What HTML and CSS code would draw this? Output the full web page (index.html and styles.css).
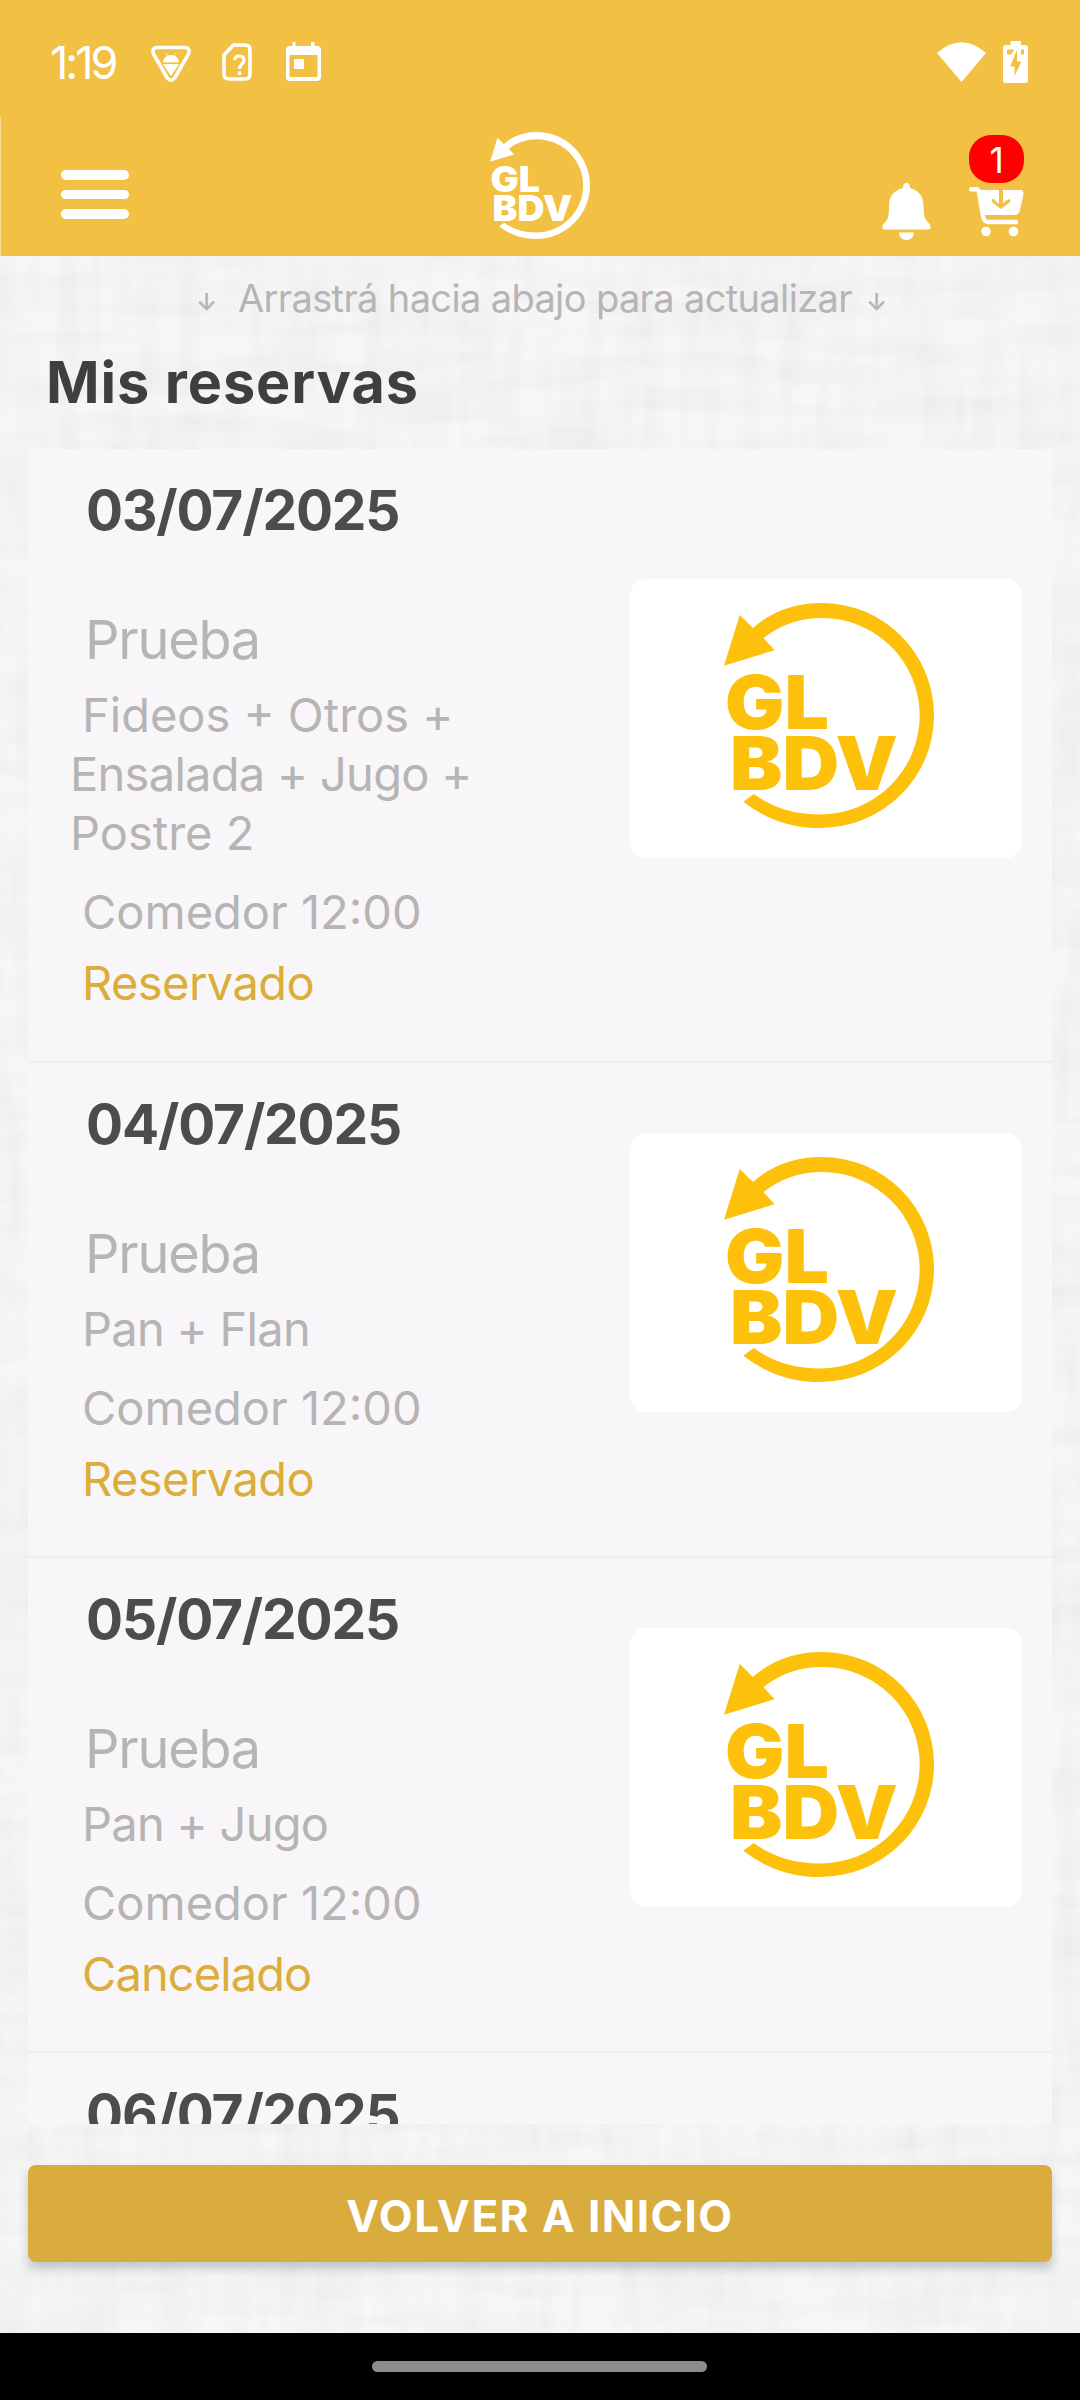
FILE: index.html
```html
<!DOCTYPE html>
<html lang="es">
<head>
<meta charset="utf-8">
<title>Mis reservas</title>
<link rel="stylesheet" href="styles.css">
</head>
<body>
<svg class="defs" width="0" height="0" aria-hidden="true">
  <symbol id="ring" viewBox="0 0 210 225">
    <path d="M0 62.7 15.7 12 29 25Q57 0 98 0A112 112.5 0 0 1 210 112.5A114 112.5 0 0 1 96 225Q53 225 19.3 198.7L29.7 191Q58 211.5 96 211.5A99.7 99 0 0 0 195.7 112.5A97.7 97.5 0 0 0 98 15Q65 15 39.5 35L50.5 47.3Z"/>
  </symbol>
  <filter id="weave-v" x="0" y="0" width="100%" height="100%">
    <feTurbulence type="fractalNoise" baseFrequency="0.05 0.008" numOctaves="2" seed="4"/>
    <feColorMatrix values="0 0 0 0 0  0 0 0 0 0  0 0 0 0 0  .05 0 0 0 -.017"/>
  </filter>
  <filter id="weave-h" x="0" y="0" width="100%" height="100%">
    <feTurbulence type="fractalNoise" baseFrequency="0.008 0.05" numOctaves="2" seed="9"/>
    <feColorMatrix values="0 0 0 0 0  0 0 0 0 0  0 0 0 0 0  .05 0 0 0 -.017"/>
  </filter>
</svg>
<header class="top">
  <div class="status">
    <span class="clock">1:19</span>
    <svg class="st-shield" width="40" height="38" viewBox="0 0 40 38"><path d="M6 2.5H34Q39.500 3 37.500 9L24 32.500Q20 38 16 32.500L2.500 9Q.5 3 6 2.500Z" fill="none" stroke="#fff" stroke-width="3.600"/><path d="M12.500 17Q13 10.500 20 10.500T27.500 17ZM12.500 19.500H27.500L20 30.500ZM14.500 8l3 3M25.500 8l-3 3" fill="#fff" stroke="#fff" stroke-width=".8"/></svg>
    <svg class="st-sim" width="30" height="38" viewBox="0 0 30 38"><path d="M11.500 2H23Q28 2 28 7V31Q28 36 23 36H7Q2 36 2 31V12Z" fill="none" stroke="#fff" stroke-width="3.600" stroke-linejoin="round"/><path d="M12.500 17Q13 13 17.500 13T22 17.500C22 21 17.500 21 17.500 26M17.500 28.500V32" fill="none" stroke="#fff" stroke-width="3.200"/></svg>
    <svg class="st-cal" width="35" height="39" viewBox="0 0 35 39"><path d="M6.500 0H9.500V4H25V0H28.500V4H31Q35 4 35 8V35Q35 39 31 39H4Q0 39 0 35V8Q0 4 4 4H6.500ZM3.500 13V35H31.500V13Z" fill="#fff" fill-rule="evenodd"/><rect x="8" y="17" width="10" height="10" rx="1" fill="#fff"/></svg>
    <svg class="st-wifi" width="49" height="40" viewBox="0 0 49 40"><path d="M0 11Q24.500-10.500 49 11L24.500 40Z" fill="#fff"/></svg>
    <svg class="st-bat" width="25" height="42" viewBox="0 0 25 42"><path d="M7.500 0H18V4H22.500Q25 4 25 6.500V39.500Q25 42 22.500 42H2.500Q0 42 0 39.500V6.500Q0 4 2.500 4H7.500Z" fill="#fff"/><path d="M4 8.500H11.500L8 13.500H5Q4 13.500 4 12.500ZM18 8.500H21V12.500Q21 13.500 20 13.500H18Z" fill="#f1c042"/><path d="M14 9V20.500H18.500L11.500 35V25.500H7.200Z" fill="#f1c042"/></svg>
  </div>
  <nav class="bar">
    <div class="burger"><i></i><i></i><i></i></div>
    <svg class="brand" width="100" height="107" viewBox="0 0 210 225"><use href="#ring"/><text class="logo-text" x="1" y="126" textLength="104" lengthAdjust="spacingAndGlyphs">GL</text><text class="logo-text" x="5" y="186.500" textLength="168" lengthAdjust="spacingAndGlyphs">BDV</text></svg>
    <div class="actions">
      <svg class="bell" width="49" height="57" viewBox="0 0 49 57"><path d="M21 5Q21 0 24.500 0T28 5Q41.500 8.500 41.500 23Q41.500 33 44 37L48 41.500Q50 46.500 46 46.500H3Q-1 46.500 1 41.500L5 37Q7 33 7 23Q7 8.500 21 5ZM17 49.500H32Q31.500 57 24.500 57T17 49.500Z" fill="#fff"/></svg>
      <div class="cart">
        <svg width="56" height="50" viewBox="0 0 56 50"><path d="M2.200 2.300H7Q9.500 2.300 10 5L14 29Q15 35 19 35H47" fill="none" stroke="#fff" stroke-width="4.400" stroke-linecap="round"/><path d="M9 3H30V17L25 12.500C23 11 21.500 13.500 23.500 15.500L32 22L40.500 15.500C42.500 13 40.500 11.500 38.500 12.500L34 16.500V3H51Q55 3 54.500 7L51 23Q50 28 45 28H14Z" fill="#fff"/><circle cx="17" cy="44.500" r="4.800" fill="#fff"/><circle cx="44.500" cy="44.500" r="4.800" fill="#fff"/></svg>
        <span class="badge">1</span>
      </div>
    </div>
  </nav>
</header>
<main class="page">
  <svg class="weave" width="1080" height="2077" aria-hidden="true"><rect width="1080" height="2077" filter="url(#weave-v)"/><rect width="1080" height="2077" filter="url(#weave-h)"/></svg>
  <p class="hint"><span class="arrow">↓</span><span class="hint-text">Arrastrá hacia abajo para actualizar</span><span class="arrow">↓</span></p>
  <h1>Mis reservas</h1>
  <section class="list">
    <article class="item">
      <div class="info">
        <h2>03/07/2025</h2>
        <h3>Prueba</h3>
        <p class="dish"><span class="l1">Fideos + Otros +</span><br><span class="tight">Ensalada + Jugo +</span><br><span>Postre 2</span></p>
        <p class="place">Comedor 12:00</p>
        <p class="state">Reservado</p>
      </div>
      <div class="thumb"><svg width="210" height="225" viewBox="0 0 210 225"><use href="#ring"/><text class="logo-text" x="1" y="126" textLength="104" lengthAdjust="spacingAndGlyphs">GL</text><text class="logo-text" x="6" y="186.500" textLength="168" lengthAdjust="spacingAndGlyphs">BDV</text></svg></div>
    </article>
    <article class="item">
      <div class="info">
        <h2>04/07/2025</h2>
        <h3>Prueba</h3>
        <p class="dish"><span class="l1 tight">Pan + Flan</span></p>
        <p class="place">Comedor 12:00</p>
        <p class="state">Reservado</p>
      </div>
      <div class="thumb"><svg width="210" height="225" viewBox="0 0 210 225"><use href="#ring"/><text class="logo-text" x="1" y="126" textLength="104" lengthAdjust="spacingAndGlyphs">GL</text><text class="logo-text" x="6" y="186.500" textLength="168" lengthAdjust="spacingAndGlyphs">BDV</text></svg></div>
    </article>
    <article class="item">
      <div class="info">
        <h2>05/07/2025</h2>
        <h3>Prueba</h3>
        <p class="dish"><span class="l1 tight">Pan + Jugo</span></p>
        <p class="place">Comedor 12:00</p>
        <p class="state cancelled">Cancelado</p>
      </div>
      <div class="thumb"><svg width="210" height="225" viewBox="0 0 210 225"><use href="#ring"/><text class="logo-text" x="1" y="126" textLength="104" lengthAdjust="spacingAndGlyphs">GL</text><text class="logo-text" x="6" y="186.500" textLength="168" lengthAdjust="spacingAndGlyphs">BDV</text></svg></div>
    </article>
    <article class="item">
      <div class="info"><h2>06/07/2025</h2></div>
    </article>
  </section>
  <button class="back" type="button"><span>VOLVER A INICIO</span></button>
</main>
<footer class="gesture"><i></i></footer>
</body>
</html>
```
FILE: styles.css
```css
* { box-sizing: border-box; margin: 0; padding: 0; }
body {
  width: 1080px; height: 2400px; overflow: hidden;
  display: flex; flex-direction: column;
  font-family: Inter, "Open Sans", sans-serif;
  font-weight: 400; color: #b6b4b5; background: #f5f4f5;
}
p, h1, h2, h3 { white-space: nowrap; }
.defs { position: absolute; }
.logo-text { font-size: 74px; font-weight: 900; }

.top { height: 256px; flex: none; background: #f2c042; }
.status { height: 117px; display: flex; align-items: flex-start; padding: 41px 52px 0 50px; }
.clock { font-size: 45px; line-height: 44px; color: #fff; width: 101px; letter-spacing: -3px; }
.st-shield { margin-top: 4px; }
.st-sim { margin: 2px 0 0 31px; }
.st-cal { margin: 1px 0 0 34px; }
.st-wifi { margin: 1px 17px 0 auto; }
.bar {
  height: 139px; padding: 0 55px 0 60px;
  display: grid; grid-template-columns: 429px 100px 1fr;
  border-left: 1px solid #f8dc95;
}
.burger { padding-top: 53px; display: flex; flex-direction: column; gap: 10px; }
.burger i { width: 68px; height: 9.500px; border-radius: 5px; background: #fff; }
.brand { margin-top: 15px; fill: #fff; }
.actions { display: flex; justify-content: flex-end; align-items: flex-start; gap: 38px; padding-top: 66px; }
.cart { position: relative; padding-top: 4px; height: 56px; }
.badge {
  position: absolute; left: 0; top: -48px; width: 55px; height: 48px;
  border-radius: 22px; background: #f00; color: #fff;
  font-size: 35px; line-height: 50px; text-align: center;
}

.page { position: relative; z-index: 0; height: 2077px; flex: none; padding: 0 28px; background: #f8f7f8; }
.weave { position: absolute; left: 0; top: 0; z-index: -1; }
.hint { height: 84px; padding-top: 15px; display: flex; justify-content: center; font-size: 38px; line-height: 55px; }
.hint-text { width: 652px; padding-left: 24px; letter-spacing: -.640px; }
.arrow { width: 18px; font-size: 24px; line-height: 64px; font-weight: 600; }
h1 { height: 109px; padding-left: 18px; font-size: 57.500px; font-weight: 700; line-height: 84px; letter-spacing: .95px; color: #403e40; }
.list { height: 1675px; overflow: hidden; background: #f8f6f8; }
.item { display: flex; border-bottom: 2px solid #efedef; }
.info { width: 602px; padding: 30px 0 48px 58px; }
.item:first-child .info { padding-bottom: 49px; }
h2 { font-size: 55px; font-weight: 700; line-height: 63px; letter-spacing: -1.150px; color: #4d4b4d; }
h3 { margin: 68px 0 0 -1px; font-size: 54px; font-weight: 400; line-height: 60px; letter-spacing: -1.200px; }
.dish, .place, .state { font-size: 47px; line-height: 59px; }
.dish { margin: 15px 0 0 -16px; }
.dish .l1 { margin-left: 12px; }
.dish .tight { letter-spacing: -.7px; }
.place { margin: 20px 0 0 -4px; }
.state { margin: 12px 0 0 -4px; color: #dbad3b; letter-spacing: -.55px; }
.cancelled { letter-spacing: -.9px; }
.thumb {
  width: 392px; height: 279px; align-self: center; margin-bottom: 74px;
  padding: 24px 0 0 94px; border-radius: 16px; background: #fff; fill: #fdc00b;
}
.back {
  display: block; width: 1024px; height: 97px; margin-top: 41px;
  border: 0; border-radius: 8px; background: #d9ac3d; color: #fff;
  font: 700 44px/102px Inter, "Open Sans", sans-serif; letter-spacing: 1.450px;
  box-shadow: 0 7px 10px rgba(70,85,85,.280);
}
.gesture { height: 67px; flex: none; background: #020102; padding-top: 28px; }
.gesture i { display: block; width: 335px; height: 11px; margin: 0 0 0 372px; border-radius: 6px; background: #8e8b8e; }
```
